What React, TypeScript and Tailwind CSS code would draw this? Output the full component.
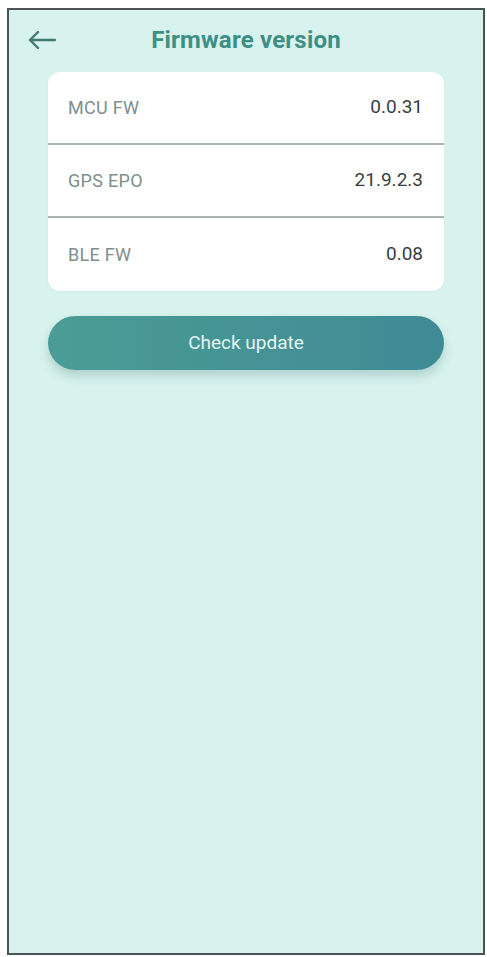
import React from "react";

const rows = [
  { label: "MCU FW", value: "0.0.31" },
  { label: "GPS EPO", value: "21.9.2.3" },
  { label: "BLE FW", value: "0.08" },
];

export default function App() {
  return (
    <div className="w-[487px] h-[957px] bg-white pl-[7px] pt-[8px] pr-[2px] pb-[2px]" style={{ fontFamily: "Roboto, 'Liberation Sans', sans-serif" }}>
      <div className="w-[478px] h-[947px] border-2 border-[#4d5353] bg-[#d8f2ed] flex flex-col">
        <div className="relative h-[62px] flex items-center justify-center">
          <svg className="absolute left-[18px] top-[20px]" width="30" height="20" viewBox="0 0 30 20" fill="none">
            <path d="M28 10H3M11 2L3 10L11 18" stroke="#3f7a72" strokeWidth="2.4" strokeLinecap="round" strokeLinejoin="round" />
          </svg>
          <span className="text-[24px] font-bold text-[#3d8f86] mt-[-2px] tracking-[0.2px]">Firmware version</span>
        </div>
        <div className="mx-[39px] bg-white rounded-[12px] shadow-[0_1px_3px_rgba(0,0,0,0.04)]">
          {rows.map((r, i) => (
            <div key={r.label} className={"h-[73px] flex items-center justify-between pl-[20px] pr-[21px] " + (i < rows.length - 1 ? "border-b-2 border-[#a9b3b1]" : "")}>
              <span className="text-[18px] text-[#7e8f8c] tracking-[0.3px]">{r.label}</span>
              <span className="text-[19px] text-[#3b3f3f]">{r.value}</span>
            </div>
          ))}
        </div>
        <div className="mx-[39px] mt-[25px] h-[54px] rounded-full bg-gradient-to-r from-[#4b9c96] to-[#3f8b95] flex items-center justify-center shadow-[0_6px_10px_rgba(60,120,115,0.25)]">
          <span className="text-[19px] text-[#e3f6f3]">Check update</span>
        </div>
      </div>
    </div>
  );
}
